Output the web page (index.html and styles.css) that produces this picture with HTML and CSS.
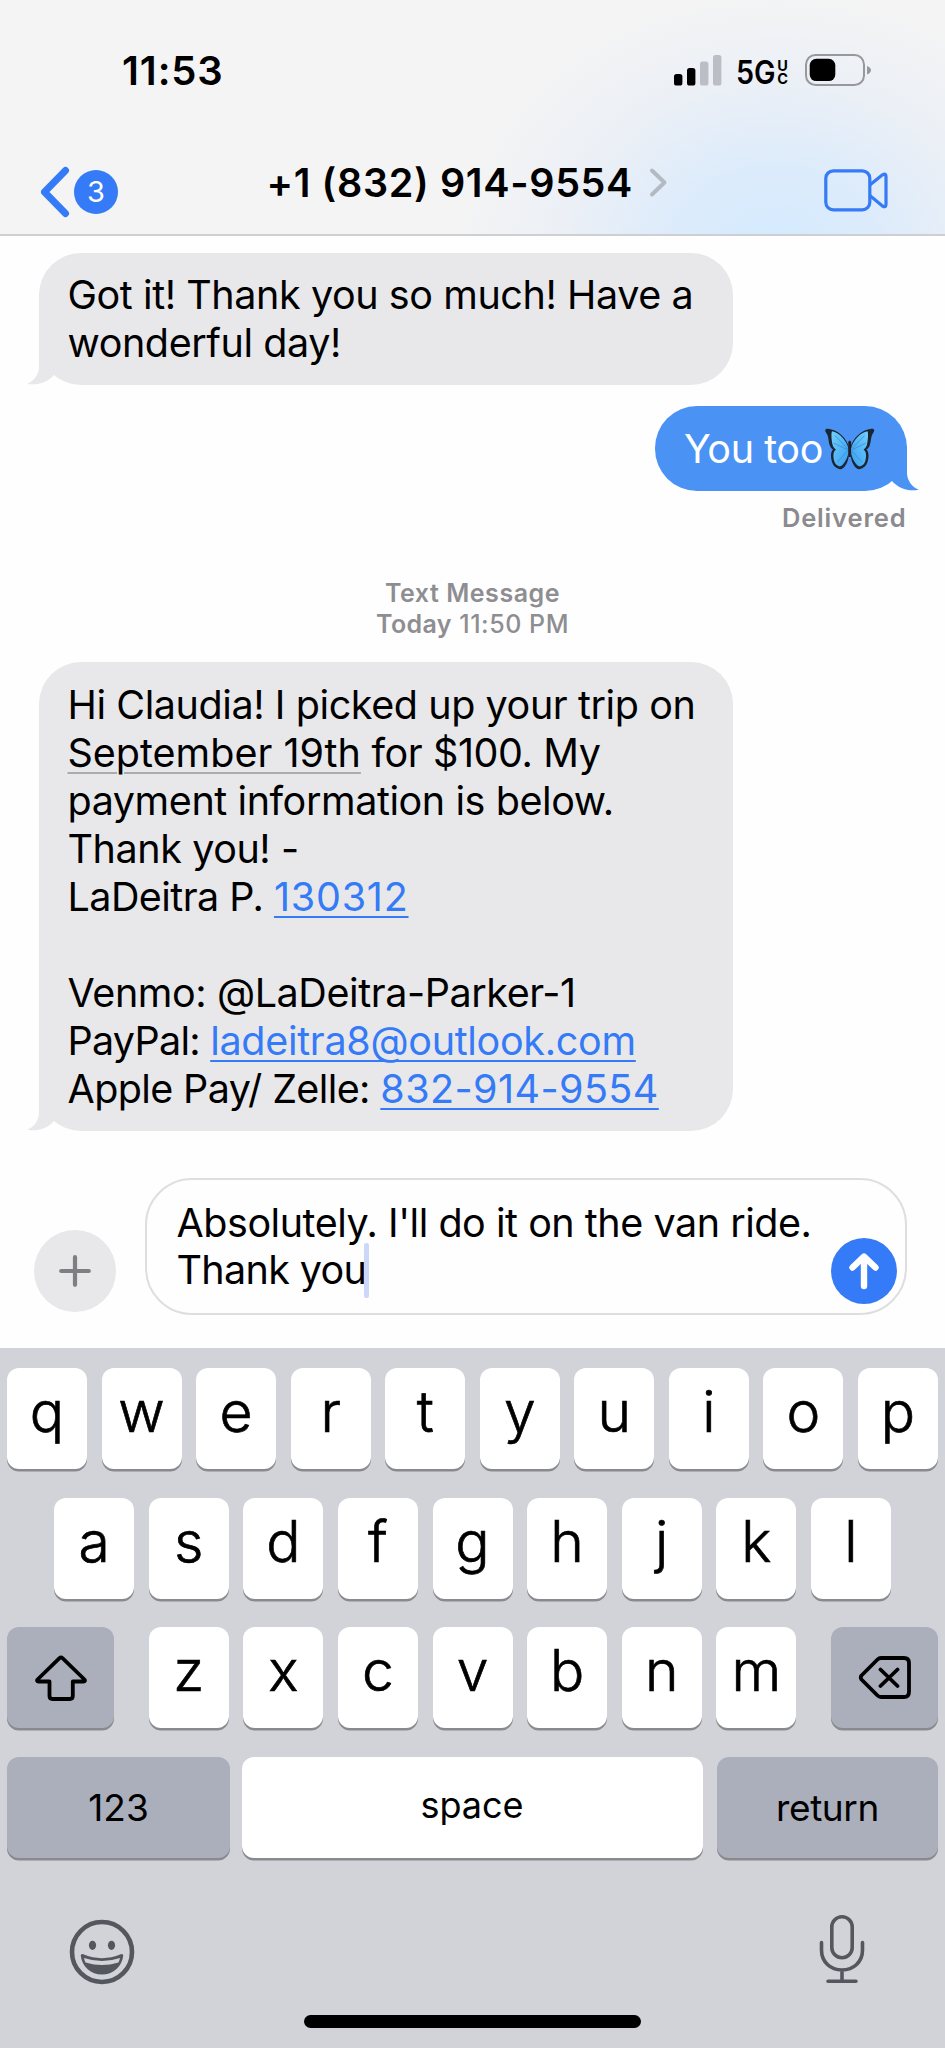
FILE: index.html
```html
<!DOCTYPE html>
<html lang="en">
<head>
<meta charset="utf-8">
<title>Messages</title>
<link rel="stylesheet" href="styles.css">
</head>
<body>
<div class="phone">
  <header class="header">
    <div class="status">
      <span class="time">11:53</span>
      <div class="status-right">
        <svg class="signal" width="48" height="31" viewBox="0 0 48 31"><rect x="0" y="19" width="8.4" height="11.5" rx="2.6"/><rect x="13" y="13" width="8.4" height="17.5" rx="2.6"/><rect x="26" y="6.5" width="8.4" height="24" rx="2.6" fill="#bbbec4"/><rect x="39" y="0" width="8.4" height="30.5" rx="2.6" fill="#bbbec4"/></svg>
        <span class="net">5G</span>
        <span class="uc"><span>U</span><span>C</span></span>
        <svg class="battery" width="67" height="33" viewBox="0 0 67 33"><rect x="1" y="1" width="58" height="30" rx="9.5" fill="none" stroke="#96989d" stroke-width="2"/><rect x="4.7" y="4.7" width="25.6" height="22.4" rx="6.6"/><path d="M62 12c2.4 .7 4 2.300 4 4.200s-1.600 3.500-4 4.200z" fill="#96989d"/></svg>
      </div>
    </div>
    <div class="nav">
      <div class="back">
        <svg width="30" height="52" viewBox="0 0 30 52"><path d="M25.500 4.500 4.500 26l21 21.500" fill="none" stroke="#357af6" stroke-width="7" stroke-linecap="round" stroke-linejoin="round"/></svg>
        <span class="badge">3</span>
      </div>
      <div class="contact">
        <span class="name">+1 (832) 914-9554</span>
        <svg width="20" height="32" viewBox="0 0 20 32"><path d="M3 3.500 15.500 15.500 3 27.500" fill="none" stroke="#b4b9c2" stroke-width="4" stroke-linecap="round" stroke-linejoin="round"/></svg>
      </div>
      <svg class="camera" width="66" height="44" viewBox="0 0 66 44"><g fill="none" stroke="#357af6" stroke-width="3.200" stroke-linejoin="round"><rect x="1.800" y="1.800" width="44" height="39" rx="7.500"/><path d="M45.800 16 58.500 5.800Q62 3.800 62 7.500V35.300Q62 39 58.500 37L45.800 26.500"/></g></svg>
    </div>
  </header>

  <main class="thread">
    <div class="bubble in">
      <p>Got it! Thank you so much! Have a</p>
      <p>wonderful day!</p>
      <svg class="tail" width="30" height="45" viewBox="0 0 30 45"><path d="M13 0V27C13 35 7 42 1 43.500 10 46 21 43 28 35L30 0z"/></svg>
    </div>
    <div class="bubble out">
      <p>You too</p>
      <svg class="butterfly" width="50" height="43" viewBox="0 0 50 43">
        <defs>
          <linearGradient id="sheen" x1="0" y1="0" x2="1" y2="1"><stop offset="0" stop-color="#72d0fa"/><stop offset="1" stop-color="#3a9df0"/></linearGradient>
          <g id="wing"><path d="M24 20C22.500 11 13 1.500 3 .8 0 .6-.4 2.500 1 4.500 4 8 3 13 5 18c.6 1.500 1.600 2.700 3 3.400C5.500 24 5.500 29 7 34c1.200 4 4 6.500 8 7.200 4 .3 8.500-7 8.800-14z" fill="#1a2634"/><path d="M23.500 20.500C21.500 12 14 4.500 7 3.200 6 5 6.500 12 7.500 16.500c.6 2.400 2 4 3.500 5-3 2-3 7-1.800 11.500 1 3.400 3 5 5.600 5.400 3-.4 7-6.400 8.400-12.400z" fill="url(#sheen)"/><path d="M23 21 10 7.500M23 22 8.500 15M22.500 23 12.500 34" fill="none" stroke="#2e88e0" stroke-width=".7"/></g>
        </defs>
        <use href="#wing"/><use href="#wing" transform="matrix(-1 0 0 1 49.500 0)"/>
        <path d="M23.200 14q1.500-3 3 0L25.800 29h-2.100z" fill="#241c28"/>
      </svg>
      <svg class="tail" width="30" height="45" viewBox="0 0 30 45"><path d="M17 0V27C17 35 23 42 29 43.500 20 46 9 43 2 35L0 0z"/></svg>
    </div>
    <div class="receipt">Delivered</div>
    <div class="stamp"><b>Text Message</b><span><b class="day">Today</b> 11:50 PM</span></div>
    <div class="bubble in">
      <p>Hi Claudia! I picked up your trip on</p>
      <p><span class="date">September 19th</span> for $100. My</p>
      <p>payment information is below.</p>
      <p>Thank you! -</p>
      <p><span class="sender">LaDeitra P. </span><a class="code">130312</a></p>
      <p>&nbsp;</p>
      <p>Venmo: @LaDeitra-Parker-1</p>
      <p><span class="paypal">PayPal: </span><a class="mail">ladeitra8@outlook.com</a></p>
      <p><span class="zelle">Apple Pay/ Zelle: </span><a class="tel">832-914-9554</a></p>
      <svg class="tail" width="30" height="45" viewBox="0 0 30 45"><path d="M13 0V27C13 35 7 42 1 43.500 10 46 21 43 28 35L30 0z"/></svg>
    </div>
  </main>

  <section class="composer">
    <div class="plus"><svg width="32" height="32" viewBox="0 0 32 32"><path d="M16 2.200v27.600M2.200 16h27.600" stroke="#7e7e84" stroke-width="4.200" stroke-linecap="round"/></svg></div>
    <div class="field">
      <div class="draft"><p>Absolutely. I'll do it on the van ride.</p><p><span class="last">Thank you</span><i class="caret"></i></p></div>
      <div class="send"><svg width="32" height="38" viewBox="0 0 32 38"><path d="M16 34V5M4.500 15.500 16 4.500l11.500 11" fill="none" stroke="#fff" stroke-width="6.400" stroke-linecap="round" stroke-linejoin="round"/></svg></div>
    </div>
  </section>

  <section class="keyboard">
    <div class="row"><span class="key">q</span><span class="key">w</span><span class="key">e</span><span class="key">r</span><span class="key">t</span><span class="key">y</span><span class="key">u</span><span class="key">i</span><span class="key">o</span><span class="key">p</span></div>
    <div class="row"><span class="key">a</span><span class="key">s</span><span class="key">d</span><span class="key">f</span><span class="key">g</span><span class="key">h</span><span class="key">j</span><span class="key">k</span><span class="key">l</span></div>
    <div class="row spread">
      <span class="key dark mod"><svg width="52" height="46" viewBox="0 0 52 46"><path d="M24.500 3.200q1.500-1.400 3 0L49.500 24.500q1.200 2-1 2H37.800V41q0 3-3 3H17.500q-3 0-3-3V26.500H3.500q-2.200 0-1-2z" fill="none" stroke="#000" stroke-width="3.800" stroke-linejoin="round"/></svg></span>
      <div class="row"><span class="key">z</span><span class="key">x</span><span class="key">c</span><span class="key">v</span><span class="key">b</span><span class="key">n</span><span class="key">m</span></div>
      <span class="key dark mod"><svg width="54" height="46" viewBox="0 0 54 46"><path d="M23 3H46q5 0 5 5V37q0 5-5 5H23q-2 0-3.500-1.500L3.500 24.500q-1.500-2 0-4L19.500 4.500Q21 3 23 3zM22.500 14.500l17 16.500M39.500 14.500l-17 16.500" fill="none" stroke="#000" stroke-width="3.800" stroke-linecap="round" stroke-linejoin="round"/></svg></span>
    </div>
    <div class="row bottom">
      <span class="key dark num">123</span><span class="key space">space</span><span class="key dark ret">return</span>
    </div>
    <div class="tools">
      <svg class="emoji" width="66" height="66" viewBox="0 0 66 66"><circle cx="33" cy="33" r="30" fill="none" stroke="#54575e" stroke-width="4.600"/><g fill="#54575e"><ellipse cx="23.500" cy="26.300" rx="3.600" ry="4.600"/><ellipse cx="42.500" cy="26.300" rx="3.600" ry="4.600"/><path fill-rule="evenodd" d="M11.700 36.500q.3-2.200 2.600-1.200Q33 43 51.700 35.300q2.300-1 2.600 1.200C53 48 44 55.500 33 55.500S13 48 11.700 36.500zM15 39c.5 2.200 1 3.500 1.600 4.500Q33 48.500 49.400 43.500C50 42.500 50.500 41.200 51 39Q33 45 15 39z"/></g></svg>
      <svg width="46" height="70" viewBox="0 0 46 70"><g fill="none" stroke="#54575e" stroke-width="3.600" stroke-linecap="round"><rect x="12.800" y="2.800" width="20.400" height="41" rx="10.200"/><path d="M2.500 28.500v7.500c0 12 9 20 20.500 20s20.500-8 20.500-20v-7.500M23 56v11M9 67.300h28"/></g></svg>
    </div>
    <div class="home"></div>
  </section>
</div>
</body>
</html>
```

FILE: styles.css
```css
* { box-sizing: border-box; margin: 0; padding: 0; }
body { font-family: Inter, "Liberation Sans", sans-serif; color: #000; background: #fefefe; }
svg { display: block; flex: none; }
.phone { width: 945px; height: 2048px; display: flex; flex-direction: column; overflow: hidden; }

.header {
  height: 236px;
  flex: none;
  border-bottom: 2px solid #cdcfd2;
  background:
    radial-gradient(ellipse 320px 265px at 775px 255px, #d3eaff 0%, rgba(217, 234, 252, .85) 35%, rgba(228, 236, 248, .55) 65%, rgba(244, 244, 244, 0) 100%),
    #f4f4f4;
}
.status { height: 140px; display: flex; justify-content: space-between; padding: 54px 73px 0 122px; }
.time { font-size: 40px; font-weight: 600; line-height: 34px; letter-spacing: .9px; }
.status-right { display: flex; height: 33px; padding-top: 1px; }
.net { width: 40px; font-size: 33px; font-weight: 600; line-height: 34px; margin-left: 14.500px; transform: scaleX(.87); transform-origin: left; }
.uc { display: flex; flex-direction: column; align-items: center; width: 13px; font-size: 14.5px; font-weight: 700; line-height: 13px; padding-top: 4px; }
.battery { margin: -1px 0 0 16px; }
.nav { display: flex; height: 94px; justify-content: space-between; padding: 26px 55.500px 0 40px; }
.back { display: flex; gap: 4px; }
.badge { width: 44px; height: 44px; margin-top: 4px; border-radius: 50%; background: #357af6; color: #fff; font-size: 29px; line-height: 44px; text-align: center; }
.contact { display: flex; gap: 16px; padding: 1px 6px 0 0; }
.name { font-size: 39.5px; font-weight: 600; line-height: 32px; letter-spacing: .65px; }
.camera { margin-top: 3px; }

.thread { display: flex; flex-direction: column; align-items: flex-start; padding: 16.500px 38.500px 0; height: 900px; flex: none; }
.bubble { position: relative; width: 694px; padding: 18.500px 28px 18px 29px; border-radius: 42px; background: #e8e8ea; font-size: 39.5px; line-height: 48.050px; letter-spacing: -.42px; white-space: nowrap; }
.bubble a { color: #357af6; text-decoration: underline; text-decoration-thickness: 2px; text-underline-offset: 5px; text-decoration-skip-ink: none; }
.date { letter-spacing: 0; text-decoration: underline; text-decoration-color: #aaabad; text-decoration-thickness: 2px; text-underline-offset: 4.5px; }
.sender { letter-spacing: -.55px; }
.bubble .code { letter-spacing: .77px; }
.paypal { letter-spacing: -.75px; }
.bubble .mail { letter-spacing: -.3px; }
.zelle { letter-spacing: -.62px; }
.bubble .tel { letter-spacing: .42px; }
.tail { position: absolute; left: -13px; bottom: 0; fill: #e8e8ea; }
.bubble.out { align-self: flex-end; width: 251.500px; display: flex; margin-top: 21px; background: #4a93f5; color: #fff; }
.out .tail { left: auto; right: -13px; fill: #4a93f5; }
.butterfly { margin: 3px 0 0 2px; }
.receipt { align-self: flex-end; font-size: 25.5px; font-weight: 600; line-height: 30px; letter-spacing: .85px; color: #8b8b8f; margin-top: 12px; }
.stamp { align-self: center; display: flex; flex-direction: column; align-items: center; margin: 45px 0 21.500px; font-size: 25px; font-weight: 500; line-height: 31.500px; letter-spacing: .55px; color: #8e8e92; }
.stamp b { font-weight: 600; }
.stamp .day { letter-spacing: .4px; }

.composer { display: flex; height: 212px; flex: none; padding: 42px 38.500px 0 33.500px; align-items: flex-start; justify-content: space-between; }
.plus { width: 82px; height: 82px; margin-top: 51.500px; border-radius: 50%; background: #e8e8ea; display: flex; align-items: center; justify-content: center; }
.field { display: flex; justify-content: space-between; width: 762px; height: 137px; border: 2px solid #dedee0; border-radius: 47px; padding: 19.500px 8px 0 30px; font-size: 39.5px; line-height: 47.500px; letter-spacing: -.47px; white-space: nowrap; }
.draft p { display: flex; align-items: center; }
.last { letter-spacing: -.65px; }
.caret { width: 5px; height: 55px; margin: -4px 0 -4px -2.500px; background: #cdd7fa; border-radius: 2px; }
.send { width: 66px; height: 66px; margin-top: 38px; border-radius: 50%; background: #357af6; display: flex; align-items: center; justify-content: center; }

.keyboard { flex: 1; background: #d2d3d9; padding: 20px 7px 0; display: flex; flex-direction: column; gap: 28.700px; }
.row { display: flex; justify-content: center; gap: 14.600px; }
.spread { justify-content: space-between; gap: 0; }
.key { width: 80px; height: 101px; border-radius: 12px; background: #fff; box-shadow: 0 2.500px 0 #898a8e; font-size: 57px; font-weight: 300; -webkit-text-stroke: .7px #000; line-height: 88px; text-align: center; }
.dark { background: #abafbb; }
.mod { width: 107px; display: flex; align-items: center; justify-content: center; }
.bottom { gap: 0; justify-content: flex-start; }
.num, .space, .ret { font-size: 37px; font-weight: 400; line-height: 101px; -webkit-text-stroke: 0; }
.num { width: 223px; }
.space { width: 461px; margin: 0 14.500px 0 11.500px; line-height: 96px; font-size: 36px; }
.ret { width: 221px; letter-spacing: -.4px; }
.tools { display: flex; justify-content: space-between; padding: 27px 73px 0 61.500px; height: 100px; }
.emoji { margin-top: 5px; }
.home { width: 337px; height: 13px; border-radius: 7px; background: #000; margin: 0 auto; }
```
